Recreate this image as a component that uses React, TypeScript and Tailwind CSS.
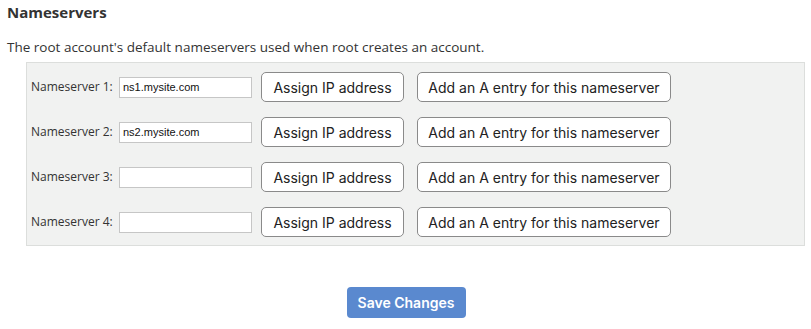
const rows = [
  { label: "Nameserver 1:", value: "ns1.mysite.com" },
  { label: "Nameserver 2:", value: "ns2.mysite.com" },
  { label: "Nameserver 3:", value: "" },
  { label: "Nameserver 4:", value: "" },
];

const App = () => {
  return (
    <div className="w-[811px] h-[329px] bg-white text-[#333] font-['Open_Sans',sans-serif]">
      <div className="pl-[7px] pt-[3px]">
        <h2 className="text-[15px] font-bold leading-[18px] text-[#333]">
          Nameservers
        </h2>
        <p className="mt-[17px] text-[13.5px] leading-[18px] text-[#333]">
          The root account's default nameservers used when root creates an
          account.
        </p>
      </div>
      <div className="ml-[26px] mt-[6px] w-[779px] bg-[#f1f2f1] border border-[#dcdedc] pl-[4px] pt-[9px] pb-[8px] flex flex-col gap-[15px]">
        {rows.map((r) => (
          <div key={r.label} className="flex items-center h-[30px]">
            <label className="w-[88px] text-[12px] text-[#333]">
              {r.label}
            </label>
            <input
              defaultValue={r.value}
              className="w-[133px] h-[21px] bg-white border border-[#c6c6c6] px-[3px] text-[11px] text-[#111] font-['Liberation_Sans',sans-serif] outline-none"
            />
            <button className="ml-[9px] w-[143px] h-[30px] bg-white border border-[#8a8a8a] rounded-[5px] text-[14px] text-[#222] font-['Inter',sans-serif]">
              Assign IP address
            </button>
            <button className="ml-[13px] w-[254px] h-[30px] bg-white border border-[#8a8a8a] rounded-[5px] text-[14px] text-[#222] font-['Inter',sans-serif]">
              Add an A entry for this nameserver
            </button>
          </div>
        ))}
      </div>
      <div className="flex justify-center mt-[41px] pl-[1px]">
        <button className="w-[119px] h-[31px] bg-[#5a89cf] rounded-[4px] text-white text-[14px] font-semibold font-['Inter',sans-serif]">
          Save Changes
        </button>
      </div>
    </div>
  );
};

export default App;
